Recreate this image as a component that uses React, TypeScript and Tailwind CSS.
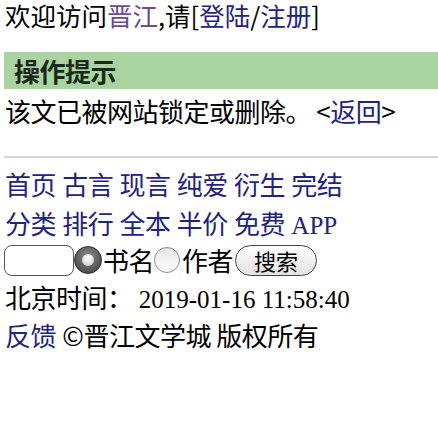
import React from "react";

const serif = { fontFamily: '"Liberation Serif", "Noto Sans CJK SC", serif' };
const sans = { fontFamily: '"Noto Sans CJK SC", sans-serif' };

// CJK runs: slightly larger glyphs, pitch kept near 25px like the reference
function Z({ children, className = "" }: { children: React.ReactNode; className?: string }) {
  return (
    <span className={`text-[26px] tracking-[-0.5px] ${className}`} style={sans}>
      {children}
    </span>
  );
}

function Radio({ checked }: { checked?: boolean }) {
  if (checked) {
    return (
      <span className="inline-flex h-[28px] w-[28px] items-center justify-center rounded-full border border-[#2a2a2a] bg-[radial-gradient(circle_at_50%_35%,#8a8a8a,#3a3a3a)]">
        <span className="h-[12px] w-[12px] rounded-full bg-[radial-gradient(circle_at_50%_30%,#ffffff,#c8c8c8)]" />
      </span>
    );
  }
  return <span className="inline-block h-[26px] w-[26px] rounded-full border border-[#8a8a8a] bg-[linear-gradient(#e6e6e6,#ffffff)]" />;
}

export default function App() {
  return (
    <div className="min-h-[423px] w-[438px] bg-white text-[25px] text-black" style={serif}>
      <div className="h-[34px] pl-[5px] text-[25.5px] leading-[30px] whitespace-nowrap" style={sans}>
        欢迎访问<span className="text-[#6b4c8f]">晋江</span>,请[<span className="text-[#22227f]">登陆</span>/<span className="text-[#22227f]">注册</span>]
      </div>

      <div className="mt-[18px] ml-[4px] h-[37px] bg-[#a9d4a1] pl-[10px] leading-[37px] text-[#1a2a1a]">
        <Z className="font-bold">操作提示</Z>
      </div>

      <div className="mt-[3px] h-[38px] pl-[5px] leading-[38px] whitespace-nowrap">
        <Z>
          该文已被网站锁定或删除。 &lt;<span className="text-[#22227f]">返回</span>&gt;
        </Z>
      </div>

      <div className="mt-[26px] ml-[4px] h-[2px] bg-[#d6d6d6]" />

      <div className="mt-[7px] pl-[5px] leading-[38px] text-[#22227f] whitespace-nowrap">
        <div className="h-[39px]">
          <Z>首页</Z> <Z>古言</Z> <Z>现言</Z> <Z>纯爱</Z> <Z>衍生</Z> <Z>完结</Z>
        </div>
        <div className="h-[39px]">
          <Z>分类</Z> <Z>排行</Z> <Z>全本</Z> <Z>半价</Z> <Z>免费</Z> APP
        </div>
      </div>

      <div className="flex h-[34px] items-center pl-[4px] whitespace-nowrap">
        <span className="h-[31px] w-[70px] rounded-[8px] border border-[#555] bg-white" />
        <Radio checked />
        <span className="ml-[1px] h-[34px] leading-[34px]">
          <Z>书名</Z>
        </span>
        <Radio />
        <span className="ml-[2px] h-[34px] leading-[34px]">
          <Z>作者</Z>
        </span>
        <span
          className="ml-[2px] inline-flex h-[31px] w-[82px] items-center justify-center rounded-full border border-[#444] bg-[linear-gradient(#ffffff,#e2e2e2)] text-[22px] leading-none"
          style={sans}
        >
          搜索
        </span>
      </div>

      <div className="mt-[2px] h-[38px] pl-[5px] leading-[36px] whitespace-nowrap">
        <Z>北京时间：</Z> 2019-01-16 11:58:40
      </div>

      <div className="h-[37px] pl-[5px] leading-[36px] whitespace-nowrap">
        <Z className="text-[#22227f]">反馈</Z> <Z>©晋江文学城 版权所有</Z>
      </div>
    </div>
  );
}
